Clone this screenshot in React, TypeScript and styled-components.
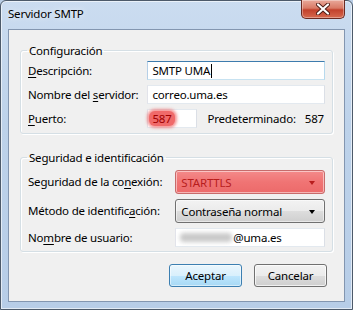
import React from "react";
import styled, { createGlobalStyle } from "styled-components";

const Global = createGlobalStyle`
  html, body { margin: 0; padding: 0; background: #b9cde5; }
  body { font-family: "Noto Sans", "Open Sans", sans-serif; }
`;

const UI_FONT = `"Noto Sans", "Open Sans", sans-serif`;

const Window = styled.div`
  width: 353px;
  height: 310px;
  box-sizing: border-box;
  border: 1px solid #4d5a6a;
  border-radius: 6px 6px 0 0;
  background: linear-gradient(180deg, #cbdcf0 0%, #bdd2ea 40%, #b7cde7 100%);
  box-shadow: inset 0 0 0 1px rgba(255, 255, 255, 0.6);
  display: flex;
  flex-direction: column;
  padding: 0 7px 7px 7px;
  font-family: ${UI_FONT};
  font-size: 11.5px;
  letter-spacing: -0.2px;
  color: #000;
`;

const TitleBar = styled.div`
  height: 28px;
  display: flex;
  align-items: flex-start;
  justify-content: space-between;
`;

const Title = styled.div`
  padding-top: 5px;
  color: #000;
  text-shadow: 0 0 6px rgba(255, 255, 255, 0.9);
`;

const CloseButton = styled.div`
  width: 44px;
  height: 19px;
  margin-top: -1px;
  box-sizing: border-box;
  border: 1px solid #6b2a22;
  border-top: none;
  border-radius: 0 0 5px 5px;
  background: linear-gradient(180deg, #e9a99b 0%, #d97a66 45%, #c2412c 55%, #d6694f 100%);
  box-shadow: inset 0 0 0 1px rgba(255, 255, 255, 0.35);
  display: flex;
  align-items: center;
  justify-content: center;
`;

const Client = styled.div`
  flex: 1;
  box-sizing: border-box;
  border: 1px solid #8396b0;
  background: #f0f0f0;
  padding: 13px 11px 0 11px;
  display: flex;
  flex-direction: column;
`;

const Group = styled.fieldset<{ $mt?: number; $h: number; $pt: number }>`
  margin: ${(p) => p.$mt ?? 0}px 0 0 0;
  padding: ${(p) => p.$pt}px 7px 0 7px;
  height: ${(p) => p.$h}px;
  box-sizing: border-box;
  border: 1px solid #d5dfe5;
  border-radius: 3px;
  box-shadow: inset 1px 1px 0 #fff, 1px 1px 0 #fff;
  min-width: 0;
`;

const Legend = styled.legend`
  padding: 0 2px;
  margin-left: -1px;
  color: #000;
`;

const Grid = styled.div<{ $gap: number; $colGap: number }>`
  display: grid;
  grid-template-columns: auto 1fr;
  column-gap: ${(p) => p.$colGap}px;
  row-gap: ${(p) => p.$gap}px;
  align-items: center;
`;

const Label = styled.label`
  white-space: nowrap;
  line-height: 16px;
`;

const U = styled.span`
  text-decoration: underline;
  text-underline-offset: 2px;
`;

const TextBox = styled.div<{ $w?: number; $focus?: boolean }>`
  height: 19px;
  box-sizing: border-box;
  width: ${(p) => (p.$w ? `${p.$w}px` : "auto")};
  background: #fff;
  border: 1px solid ${(p) => (p.$focus ? "#569de5" : "#abadb3")};
  border-top-color: ${(p) => (p.$focus ? "#3d7bad" : "#e3e9ef")};
  border-left-color: ${(p) => (p.$focus ? "#b5cfe7" : "#e2e3ea")};
  border-right-color: ${(p) => (p.$focus ? "#b7d9ed" : "#dbdfe6")};
  border-bottom-color: ${(p) => (p.$focus ? "#c7e2f1" : "#e3e9ef")};
  padding: 0 4px;
  display: flex;
  align-items: center;
`;

const Caret = styled.span`
  display: inline-block;
  width: 1px;
  height: 14px;
  background: #000;
  margin-left: 1px;
`;

const PortRow = styled.div`
  display: flex;
  align-items: center;
  gap: 10px;
`;

const Highlight = styled.span`
  background: #f06a6a;
  color: #a00000;
  border-radius: 6px;
  padding: 0 3px;
  margin-left: -3px;
  box-shadow: 0 0 3px 2px rgba(240, 106, 106, 0.7);
`;

const Default = styled.div`
  flex: 1;
  display: flex;
  justify-content: space-between;
  padding-right: 1px;
`;

const Select = styled.div<{ $red?: boolean }>`
  height: 24px;
  box-sizing: border-box;
  border: 1px solid ${(p) => (p.$red ? "#c76b6b" : "#707070")};
  border-radius: 3px;
  background: ${(p) =>
    p.$red
      ? "linear-gradient(180deg, #f48a8a 0%, #f07474 50%, #ec6a6a 100%)"
      : "linear-gradient(180deg, #f2f2f2 0%, #ebebeb 50%, #dddddd 51%, #cfcfcf 100%)"};
  box-shadow: inset 0 0 0 1px rgba(255, 255, 255, 0.5);
  display: flex;
  align-items: center;
  justify-content: space-between;
  padding: 0 9px 0 5px;
  color: ${(p) => (p.$red ? "#b81d1d" : "#000")};
`;

const Arrow = styled.span<{ $red?: boolean }>`
  width: 0;
  height: 0;
  border-left: 3.5px solid transparent;
  border-right: 3.5px solid transparent;
  border-top: 4px solid ${(p) => (p.$red ? "#b81d1d" : "#000")};
  margin-top: 2px;
`;

const Blur = styled.span`
  display: inline-block;
  width: 52px;
  height: 9px;
  background: #c9c9c9;
  border-radius: 4px;
  filter: blur(2px);
  margin-right: 1px;
`;

const Buttons = styled.div`
  display: flex;
  justify-content: flex-end;
  gap: 12px;
  margin-top: 12px;
  padding-right: 6px;
`;

const Button = styled.div<{ $default?: boolean }>`
  width: 73px;
  height: 23px;
  box-sizing: border-box;
  border: 1px solid ${(p) => (p.$default ? "#3c7fb1" : "#707070")};
  border-radius: 3px;
  background: ${(p) =>
    p.$default
      ? "linear-gradient(180deg, #eaf6fd 0%, #d9f0fc 50%, #bee6fd 51%, #a7d9f5 100%)"
      : "linear-gradient(180deg, #f2f2f2 0%, #ebebeb 50%, #dddddd 51%, #cfcfcf 100%)"};
  box-shadow: inset 0 0 0 1px ${(p) => (p.$default ? "rgba(255,255,255,0.5)" : "rgba(255,255,255,0.7)")};
  display: flex;
  align-items: center;
  justify-content: center;
`;

export default function App() {
  return (
    <>
      <Global />
      <Window>
        <TitleBar>
          <Title>Servidor SMTP</Title>
          <CloseButton>
            <svg width="14" height="12" viewBox="0 0 14 12">
              <path
                d="M2 1.5 L12 10.5 M12 1.5 L2 10.5"
                stroke="#4a1a14"
                strokeWidth="4"
                strokeLinecap="round"
              />
              <path
                d="M2 1.5 L12 10.5 M12 1.5 L2 10.5"
                stroke="#ffffff"
                strokeWidth="2.2"
                strokeLinecap="round"
              />
            </svg>
          </CloseButton>
        </TitleBar>
        <Client>
          <Group $h={91} $pt={3}>
            <Legend>Configuración</Legend>
            <Grid $gap={5} $colGap={9}>
              <Label>
                <U>D</U>escripción:
              </Label>
              <TextBox $focus>
                SMTP UMA
                <Caret />
              </TextBox>
              <Label>
                Nombre del <U>s</U>ervidor:
              </Label>
              <TextBox>correo.uma.es</TextBox>
              <Label>
                <U>P</U>uerto:
              </Label>
              <PortRow>
                <TextBox $w={50}>
                  <Highlight>587</Highlight>
                </TextBox>
                <Default>
                  <span>Predeterminado:</span>
                  <span>587</span>
                </Default>
              </PortRow>
            </Grid>
          </Group>
          <Group $mt={16} $h={102} $pt={5}>
            <Legend>Seguridad e identificación</Legend>
            <Grid $gap={5} $colGap={13}>
              <Label>
                Seguridad de la co<U>n</U>exión:
              </Label>
              <Select $red>
                <span>STARTTLS</span>
                <Arrow $red />
              </Select>
              <Label>
                Método de identific<U>a</U>ción:
              </Label>
              <Select>
                <span>Contraseña normal</span>
                <Arrow />
              </Select>
              <Label>
                No<U>m</U>bre de usuario:
              </Label>
              <TextBox>
                <Blur />
                @uma.es
              </TextBox>
            </Grid>
          </Group>
          <Buttons>
            <Button $default>Aceptar</Button>
            <Button>Cancelar</Button>
          </Buttons>
        </Client>
      </Window>
    </>
  );
}
